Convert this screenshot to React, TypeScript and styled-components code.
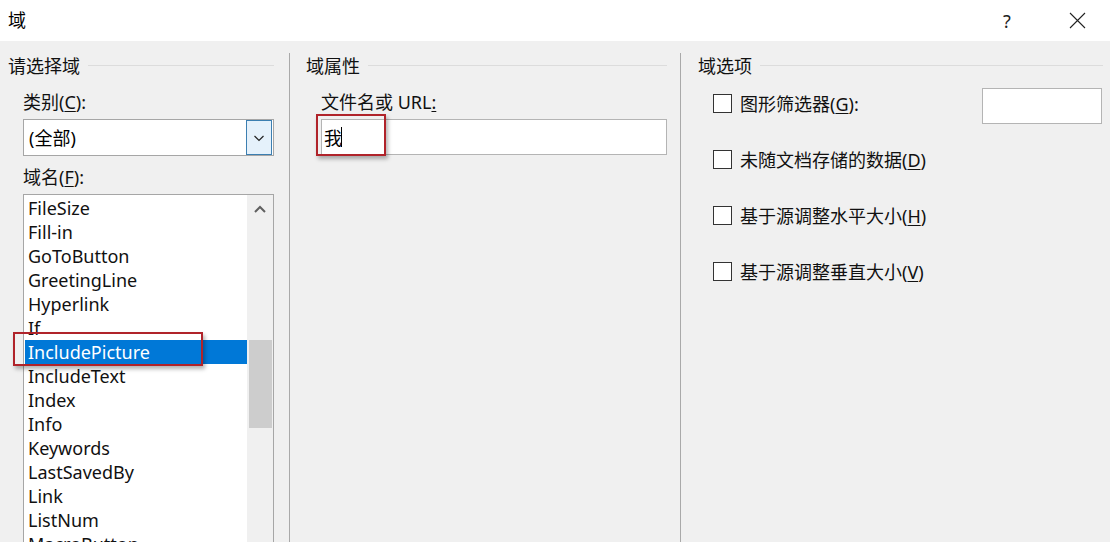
import React from 'react';
import styled, { createGlobalStyle } from 'styled-components';

const GlobalStyle = createGlobalStyle`
  html, body {
    margin: 0;
    padding: 0;
    background: #f0f0f0;
  }
  body {
    font-family: 'Noto Sans', 'Noto Sans CJK SC', sans-serif;
    color: #000;
  }
`;

const fieldNames = [
  'FileSize',
  'Fill-in',
  'GoToButton',
  'GreetingLine',
  'Hyperlink',
  'If',
  'IncludePicture',
  'IncludeText',
  'Index',
  'Info',
  'Keywords',
  'LastSavedBy',
  'Link',
  'ListNum',
  'MacroButton',
  'MergeField',
];

const Dialog = styled.div`
  width: 1110px;
  height: 542px;
  overflow: hidden;
  display: flex;
  flex-direction: column;
  background: #f0f0f0;
`;

const TitleBar = styled.div`
  height: 41px;
  flex-shrink: 0;
  background: #fff;
  display: flex;
  align-items: center;
  padding-left: 8px;
`;

const Title = styled.div`
  flex: 1;
  font-size: 18px;
  line-height: 24px;
  margin-top: -2px;
`;

const TitleButton = styled.div<{ $w: number }>`
  width: ${({ $w }) => $w}px;
  height: 41px;
  display: flex;
  align-items: center;
  justify-content: center;
  font-size: 18px;
  color: #222;
`;

const Body = styled.div`
  flex: 1;
  display: flex;
  min-height: 0;
`;

const Column = styled.div<{ $w?: number; $pl: number; $pr: number; $divider?: boolean }>`
  ${({ $w }) => ($w ? `width: ${$w}px; flex-shrink: 0;` : 'flex: 1;')}
  box-sizing: border-box;
  padding: 13px ${({ $pr }) => $pr}px 0 ${({ $pl }) => $pl}px;
  display: flex;
  flex-direction: column;
  position: relative;

  ${({ $divider }) =>
    $divider &&
    `&:after {
      content: '';
      position: absolute;
      right: 0;
      top: 12px;
      bottom: 0;
      width: 1px;
      background: #a9a9a9;
    }`}
`;

const GroupHeader = styled.div`
  display: flex;
  align-items: center;
  gap: 8px;
  font-size: 18px;
  line-height: 24px;
  color: #111;

  &:after {
    content: '';
    flex: 1;
    height: 1px;
    margin-top: -2px;
    background: #dcdcdc;
  }
`;

const FieldLabel = styled.div<{ $mt: number }>`
  margin: ${({ $mt }) => $mt}px 0 0 15px;
  font-size: 18px;
  line-height: 24px;
  color: #111;

  u {
    text-underline-offset: 2px;
  }
`;

const ComboBox = styled.div`
  margin: 5px 0 0 15px;
  height: 39px;
  box-sizing: border-box;
  border: 1px solid #a6a6a6;
  background: #fff;
  display: flex;
  align-items: center;
  padding: 0 1px 0 5px;
`;

const ComboValue = styled.div`
  flex: 1;
  font-size: 18px;
  line-height: 24px;
`;

const DropButton = styled.div`
  width: 26px;
  height: 35px;
  box-sizing: border-box;
  border: 1px solid #3c7fb1;
  background: #e5f1fb;
  display: flex;
  align-items: center;
  justify-content: center;
`;

const ListBox = styled.div`
  margin: 5px 0 0 15px;
  height: 400px;
  box-sizing: border-box;
  border: 1px solid #a6a6a6;
  background: #fff;
  display: flex;
  position: relative;
`;

const ListItems = styled.div`
  flex: 1;
  padding: 1px 0 0 1px;
`;

const ListItem = styled.div<{ $selected?: boolean }>`
  height: 24px;
  line-height: 24px;
  padding-left: 3px;
  font-size: 18px;
  white-space: nowrap;
  background: ${({ $selected }) => ($selected ? '#0078d7' : 'transparent')};
  color: ${({ $selected }) => ($selected ? '#fff' : '#111')};
`;

const ScrollBar = styled.div`
  width: 26px;
  background: #f0f0f0;
  display: flex;
  flex-direction: column;
  align-items: center;
`;

const ScrollArrow = styled.div`
  height: 28px;
  width: 100%;
  display: flex;
  align-items: center;
  justify-content: center;
`;

const ScrollThumb = styled.div`
  margin-top: 117px;
  width: 23px;
  height: 88px;
  background: #cdcdcd;
`;

const Highlight = styled.div<{ $l: number; $t: number; $w: number; $h: number }>`
  position: absolute;
  left: ${({ $l }) => $l}px;
  top: ${({ $t }) => $t}px;
  width: ${({ $w }) => $w}px;
  height: ${({ $h }) => $h}px;
  box-sizing: border-box;
  border: 2px solid #b0232a;
  box-shadow: 2px 3px 4px rgba(0, 0, 0, 0.3);
  pointer-events: none;
`;

const TextInput = styled.div`
  margin: 5px 0 0 15px;
  height: 36px;
  box-sizing: border-box;
  border: 1px solid #b4b4b4;
  background: #fff;
  display: flex;
  align-items: center;
  padding-left: 2px;
  font-size: 18px;
  position: relative;
`;

const Caret = styled.span`
  display: inline-block;
  width: 1px;
  height: 20px;
  background: #000;
  vertical-align: middle;
  margin-left: -1px;
`;

const OptionList = styled.div`
  display: flex;
  flex-direction: column;
  gap: 37px;
  margin: 16px 0 0 15px;
`;

const OptionRow = styled.div`
  display: flex;
  align-items: center;
  height: 19px;
  font-size: 18px;
  color: #111;

  u {
    text-underline-offset: 2px;
  }
`;

const CheckBox = styled.div`
  width: 19px;
  height: 19px;
  box-sizing: border-box;
  border: 1px solid #333;
  background: #fff;
  margin-right: 8px;
  flex-shrink: 0;
`;

const OptionText = styled.div`
  flex: 1;
  line-height: 24px;
`;

const SmallInput = styled.div`
  width: 120px;
  height: 36px;
  margin: 4px 1px 0 0;
  box-sizing: border-box;
  border: 1px solid #b4b4b4;
  background: #fff;
`;

const Chevron = ({ up }: { up?: boolean }) => (
  <svg width="12" height="8" viewBox="0 0 12 8">
    <path
      d={up ? 'M1 7 L6 2 L11 7' : 'M1.5 2 L6 6.5 L10.5 2'}
      fill="none"
      stroke={up ? '#606060' : '#222'}
      strokeWidth={up ? 2 : 1.2}
    />
  </svg>
);

const App = () => {
  return (
    <Dialog>
      <GlobalStyle />
      <TitleBar>
        <Title>域</Title>
        <TitleButton $w={74}>?</TitleButton>
        <TitleButton $w={66}>
          <svg width="17" height="17" viewBox="0 0 17 17">
            <path d="M1 1 L16 16 M16 1 L1 16" stroke="#222" strokeWidth="1.1" />
          </svg>
        </TitleButton>
      </TitleBar>

      <Body>
        <Column $w={290} $pl={8} $pr={16} $divider>
          <GroupHeader>请选择域</GroupHeader>
          <FieldLabel $mt={12}>
            类别(<u>C</u>):
          </FieldLabel>
          <ComboBox>
            <ComboValue>(全部)</ComboValue>
            <DropButton>
              <Chevron />
            </DropButton>
          </ComboBox>
          <FieldLabel $mt={9}>
            域名(<u>F</u>):
          </FieldLabel>
          <ListBox>
            <ListItems>
              {fieldNames.map((name) => (
                <ListItem key={name} $selected={name === 'IncludePicture'}>
                  {name}
                </ListItem>
              ))}
            </ListItems>
            <ScrollBar>
              <ScrollArrow>
                <Chevron up />
              </ScrollArrow>
              <ScrollThumb />
            </ScrollBar>
            <Highlight $l={-11} $t={137} $w={190} $h={34} />
          </ListBox>
        </Column>

        <Column $w={391} $pl={16} $pr={14} $divider>
          <GroupHeader>域属性</GroupHeader>
          <FieldLabel $mt={12}>
            文件名或 URL<u>:</u>
          </FieldLabel>
          <TextInput>
            我<Caret />
            <Highlight $l={-6} $t={-6} $w={70} $h={42} />
          </TextInput>
        </Column>

        <Column $pl={17} $pr={7}>
          <GroupHeader>域选项</GroupHeader>
          <OptionList>
            <OptionRow>
              <CheckBox />
              <OptionText>
                图形筛选器(<u>G</u>):
              </OptionText>
              <SmallInput />
            </OptionRow>
            <OptionRow>
              <CheckBox />
              <OptionText>
                未随文档存储的数据(<u>D</u>)
              </OptionText>
            </OptionRow>
            <OptionRow>
              <CheckBox />
              <OptionText>
                基于源调整水平大小(<u>H</u>)
              </OptionText>
            </OptionRow>
            <OptionRow>
              <CheckBox />
              <OptionText>
                基于源调整垂直大小(<u>V</u>)
              </OptionText>
            </OptionRow>
          </OptionList>
        </Column>
      </Body>
    </Dialog>
  );
};

export default App;
